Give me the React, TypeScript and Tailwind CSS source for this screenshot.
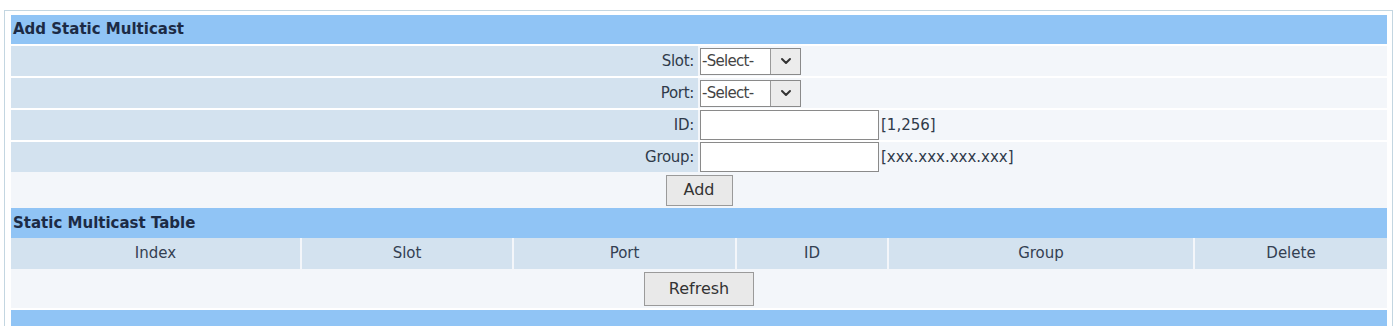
import { ChevronDown } from 'lucide-react';

const font = "font-['DejaVu_Sans','Liberation_Sans',sans-serif]";

const FormRow = ({ label, h, children }: { label: string; h: string; children: React.ReactNode }) => (
  <div className={`flex mt-[2px] ${h}`}>
    <div className="w-[687px] bg-[#d3e2ef] flex items-center justify-end pr-[4px] text-[15px] text-[#2f3a4a] tracking-[-0.3px]">{label}</div>
    <div className="flex-1 bg-[#f3f6fa] flex items-center pl-[2px]">{children}</div>
  </div>
);

const Select = () => (
  <div className="flex h-[27px] border border-[#8a8a8a] bg-white">
    <div className="w-[69px] flex items-center pl-[1px] text-[15px] text-[#444] tracking-[-0.7px]">-Select-</div>
    <div className="w-[30px] border-l border-[#9a9a9a] bg-[#ececec] flex items-center justify-center">
      <ChevronDown size={16} strokeWidth={3} className="text-[#333]" />
    </div>
  </div>
);

const cols = [
  { name: 'Index', w: 'w-[289px]' },
  { name: 'Slot', w: 'w-[210px]' },
  { name: 'Port', w: 'w-[221px]' },
  { name: 'ID', w: 'w-[150px]' },
  { name: 'Group', w: 'w-[304px]' },
  { name: 'Delete', w: 'flex-1' },
];

export default function App() {
  return (
    <div className={`h-[326px] overflow-hidden bg-white pt-[10px] pl-[4px] pr-[5px] ${font}`}>
      <div className="h-[316px] border-x border-t border-[#c3d6e1] pt-[4px] pl-[6px] pr-[5px] flex flex-col">
        <div className="h-[29px] bg-[#90c4f5] flex items-center pl-[2px] text-[15px] font-bold text-[#1c2b45]">
          Add Static Multicast
        </div>
        <FormRow label="Slot:" h="h-[30px]">
          <Select />
        </FormRow>
        <FormRow label="Port:" h="h-[30px]">
          <Select />
        </FormRow>
        <FormRow label="ID:" h="h-[30px]">
          <input className="w-[179px] h-[30px] border border-[#8a8a8a] bg-white" />
          <span className="ml-[2px] text-[15px] text-[#2f3a4a]">[1,256]</span>
        </FormRow>
        <FormRow label="Group:" h="h-[30px]">
          <input className="w-[179px] h-[30px] border border-[#8a8a8a] bg-white" />
          <span className="ml-[2px] text-[15px] text-[#2f3a4a]">[xxx.xxx.xxx.xxx]</span>
        </FormRow>
        <div className="h-[36px] bg-[#f3f6fa] flex items-center justify-center">
          <button className="w-[67px] h-[31px] border border-[#9a9a9a] bg-[#e9e9e9] text-[16px] text-[#333]">Add</button>
        </div>
        <div className="h-[30px] bg-[#90c4f5] flex items-center pl-[2px] text-[15px] font-bold text-[#1c2b45]">
          Static Multicast Table
        </div>
        <div className="h-[31px] flex gap-[2px] bg-[#f3f6fa]">
          {cols.map((c) => (
            <div key={c.name} className={`${c.w} bg-[#d3e2ef] flex items-center justify-center text-[15px] text-[#334052]`}>
              {c.name}
            </div>
          ))}
        </div>
        <div className="h-[39px] bg-[#f3f6fa] flex items-center justify-center">
          <button className="w-[110px] h-[34px] border border-[#9a9a9a] bg-[#e9e9e9] text-[16px] text-[#333]">Refresh</button>
        </div>
        <div className="mt-[2px] flex-1 bg-[#90c4f5]" />
      </div>
    </div>
  );
}
